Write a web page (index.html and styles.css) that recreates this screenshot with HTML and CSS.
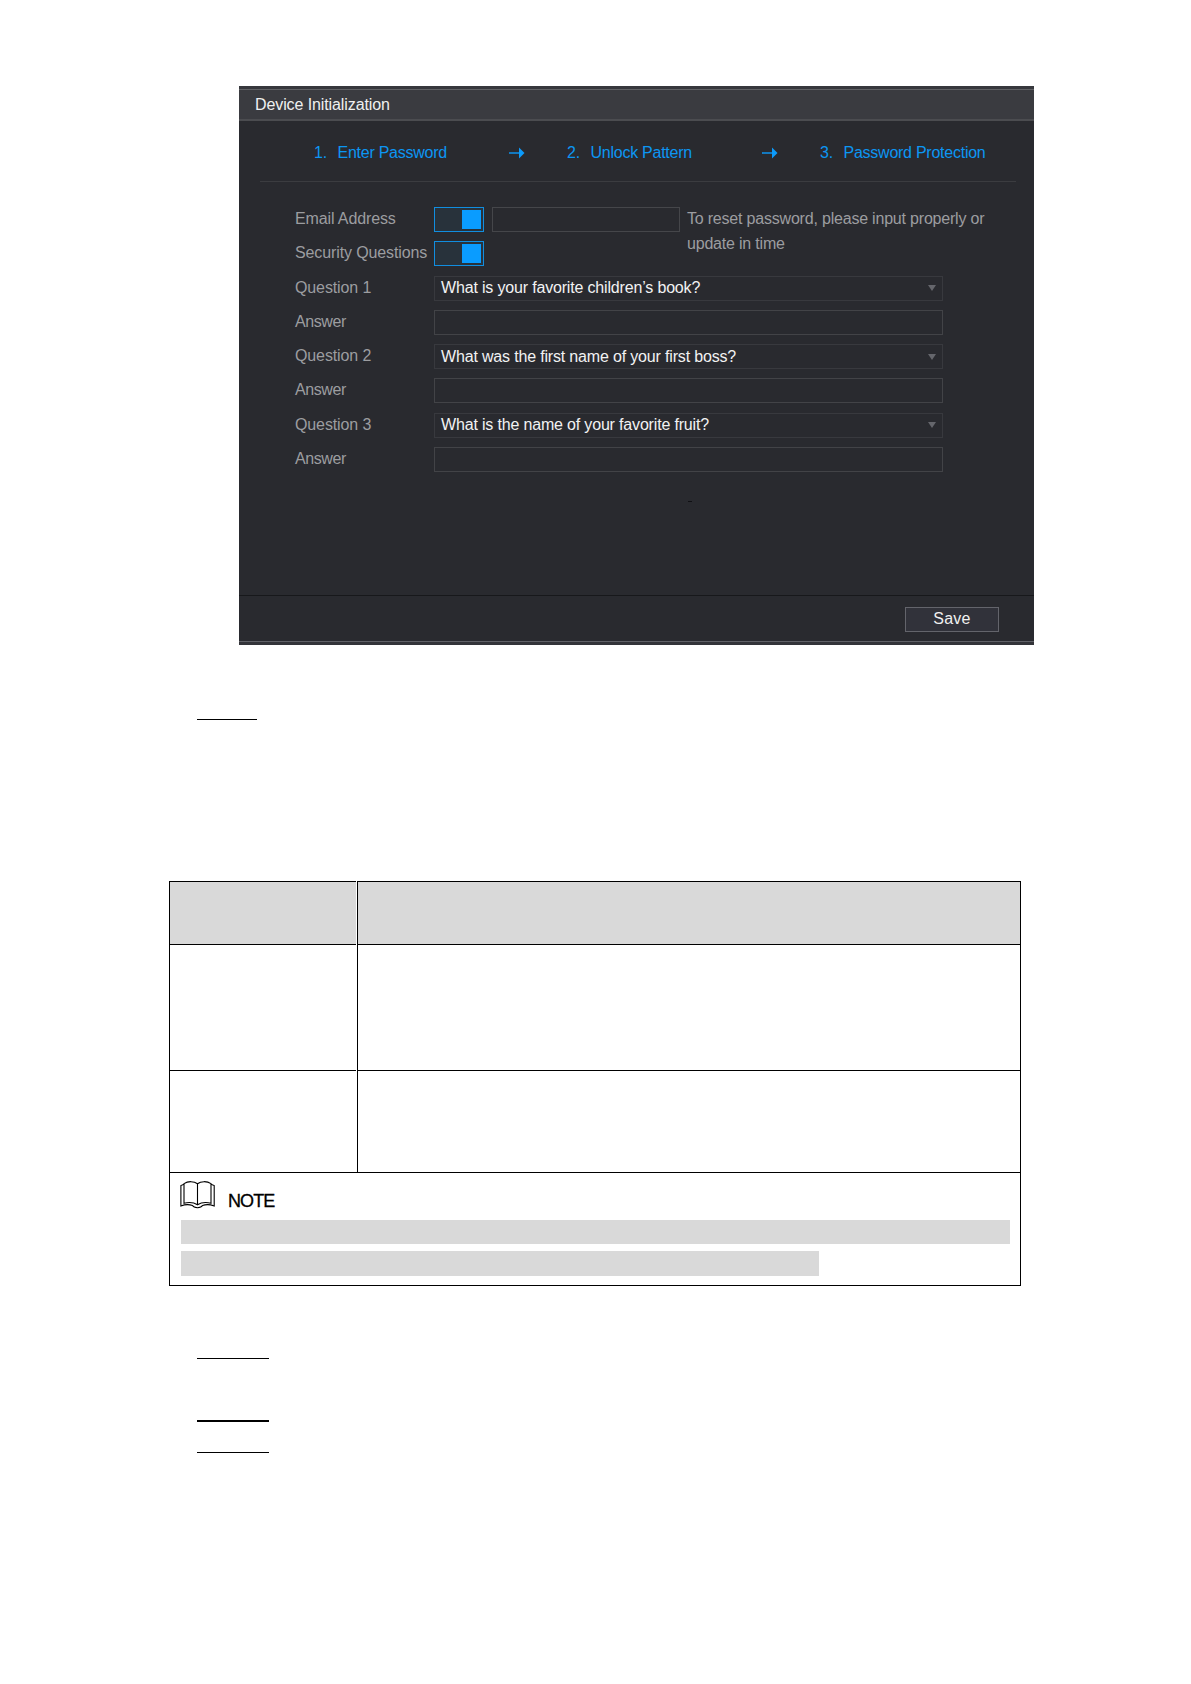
FILE: index.html
```
<!DOCTYPE html>
<html lang="en">

<head>
    <meta charset="UTF-8">
    <meta name="viewport" content="width=device-width, initial-scale=1.0">
    <title>Device Initialization</title>
    <link rel="stylesheet" href="styles.css">
</head>

<body>
    <!-- Dialog -->
    <div class="dialog">
        <div class="dialog-title"><span>Device Initialization</span></div>

        <div class="dialog-body">
            <div class="steps">
                <div class="step step-1"><span class="num">1.</span><span>Enter Password</span></div>
                <svg class="arrow" width="16" height="12" viewBox="0 0 16 12"><path d="M0 6h10" stroke="#0c9bfb" stroke-width="1.4"/><path d="M10 0.5L15.5 6L10 11.5z" fill="#0c9bfb"/></svg>
                <div class="step step-2"><span class="num">2.</span><span>Unlock Pattern</span></div>
                <svg class="arrow" width="16" height="12" viewBox="0 0 16 12"><path d="M0 6h10" stroke="#0c9bfb" stroke-width="1.4"/><path d="M10 0.5L15.5 6L10 11.5z" fill="#0c9bfb"/></svg>
                <div class="step step-3"><span class="num">3.</span><span>Password Protection</span></div>
            </div>

            <div class="form">
                <div class="row">
                    <label>Email Address</label>
                    <div class="toggle"><i></i></div>
                    <div class="email-input"></div>
                    <p class="hint">To reset password, please input properly or<br>update in time</p>
                </div>
                <div class="row">
                    <label>Security Questions</label>
                    <div class="toggle"><i></i></div>
                </div>
                <div class="row">
                    <label>Question 1</label>
                    <div class="field select"><span>What is your favorite children’s book?</span><b class="caret"></b></div>
                </div>
                <div class="row">
                    <label class="answer">Answer</label>
                    <div class="field"></div>
                </div>
                <div class="row">
                    <label>Question 2</label>
                    <div class="field select"><span>What was the first name of your first boss?</span><b class="caret"></b></div>
                </div>
                <div class="row">
                    <label class="answer">Answer</label>
                    <div class="field"></div>
                </div>
                <div class="row">
                    <label>Question 3</label>
                    <div class="field select"><span>What is the name of your favorite fruit?</span><b class="caret"></b></div>
                </div>
                <div class="row">
                    <label class="answer">Answer</label>
                    <div class="field"></div>
                </div>
            </div>
            <div class="speck"></div>
        </div>

        <div class="dialog-footer">
            <div class="save">Save</div>
        </div>
    </div>

    <div class="rule rule-short"></div>

    <!-- Table -->
    <div class="table">
        <div class="table-row head">
            <div class="cell-left"></div>
            <div class="cell-right"></div>
        </div>
        <div class="table-row row-a">
            <div class="cell-left"></div>
            <div class="cell-right"></div>
        </div>
        <div class="table-row row-b">
            <div class="cell-left"></div>
            <div class="cell-right"></div>
        </div>
        <div class="note">
            <div class="note-title">
                <svg width="36" height="28" viewBox="0 0 36 28" fill="none" stroke="#000" stroke-width="1.1">
                    <path d="M17.500 2.800C14 0 8 0 4 2.600V22.300C9 21 14 21.600 17.500 23.800C21 21.600 26 21 31 22.300V2.600C27 0 21 0 17.500 2.800V23.800"/>
                    <path d="M4 3.200L0.900 4.600V25C5 23.400 9 23.200 12.500 24.600C14 27.400 21 27.400 22.500 24.600C26 23.200 30 23.400 34.200 25V4.600L31 3.200"/>
                </svg>
                <span>NOTE</span>
            </div>
            <div class="bar"></div>
            <div class="bar bar-short"></div>
        </div>
    </div>

    <div class="rule rule-a"></div>
    <div class="rule rule-b"></div>
    <div class="rule rule-c"></div>
</body>

</html>
```
FILE: styles.css
```
* {
    box-sizing: border-box;
}

body {
    background: #fff;
    margin: 0;
    padding-top: 86px;
    font-family: "Liberation Sans", Arial, sans-serif;
    font-size: 16px;
    height: 1684px;
    overflow: hidden;
}

/* Dialog */
.dialog {
    width: 795px;
    height: 559px;
    margin-left: 239px;
    background: #292a2f;
    display: flex;
    flex-direction: column;
}

.dialog-title {
    height: 35px;
    background: #3a3b40;
    border-top: 3px solid #37383d;
    border-bottom: 2px solid #4b4c50;
    color: #f0f0f0;
    line-height: 32px;
    padding-left: 16px;
    letter-spacing: -0.1px;
    box-shadow: inset 0 1px #606165;
}

.dialog-body {
    height: 474px;
}

.steps {
    display: flex;
    align-items: center;
    height: 61px;
    margin: 0 18px 0 21px;
    padding: 3px 0 0 54px;
    border-bottom: 1px solid #3b3c40;
    color: #0c96f3;
    letter-spacing: -0.25px;
}

.step {
    display: flex;
    white-space: nowrap;
}

.num {
    width: 23.5px;
}

.step-1,
.step-2 {
    width: 195px;
}

.arrow {
    width: 16px;
    margin-right: 42px;
}

/* Form */
.form {
    padding: 25px 0 0 56px;
}

.row {
    display: flex;
    height: 34.25px;
    line-height: 24px;
    color: #9c9da0;
}

.row label {
    width: 139px;
    flex: none;
    white-space: nowrap;
    letter-spacing: -0.12px;
}

.row .answer {
    letter-spacing: -0.4px;
}

.toggle {
    width: 50px;
    height: 25px;
    border: 1px solid #118ee0;
    background: #28323b;
    padding: 2px;
    display: flex;
    justify-content: flex-end;
}

.toggle i {
    width: 19px;
    background: #0a9cff;
}

.email-input {
    width: 188px;
    height: 25px;
    margin: 0 8px;
    border: 1px solid #45464a;
}

.hint {
    margin: -1px 0 0 -1px;
    height: 25px;
    line-height: 25px;
    white-space: nowrap;
    letter-spacing: -0.2px;
}

.field {
    width: 509px;
    height: 25px;
    border: 1px solid #424347;
}

.select {
    display: flex;
    align-items: center;
    justify-content: space-between;
    padding: 0 6px;
    border-color: #38393e;
    color: #f2f2f3;
    letter-spacing: -0.17px;
}

.caret {
    border: 4px solid transparent;
    border-top: 6px solid #65666c;
    border-bottom: 0;
}

.speck {
    width: 4px;
    height: 1px;
    margin: 20px 0 0 449px;
    background: #101014;
}

.dialog-footer {
    flex: 1;
    border-top: 1px solid #17181b;
    border-bottom: 3px solid #333439;
    box-shadow: inset 0 -1px #606167;
    padding: 11px 35px 0 0;
}

.save {
    width: 94px;
    height: 25px;
    margin-left: auto;
    border: 1px solid #63646b;
    background: #31323a;
    color: #f0f0f0;
    text-align: center;
    line-height: 21px;
    letter-spacing: 0.2px;
}

/* Underlines */
.rule {
    width: 72px;
    height: 1px;
    margin-left: 197px;
    background: #000;
}

.rule-short {
    width: 60px;
    margin-top: 74px;
}

.rule-a {
    margin-top: 72px;
}

.rule-b {
    height: 2px;
    margin-top: 61px;
}

.rule-c {
    margin-top: 30px;
}

/* Table */
.table {
    width: 852px;
    margin: 161px 0 0 169px;
    border: 1px solid #000;
    border-top: 0;
}

.table-row {
    display: flex;
    gap: 1px;
}

.cell-left {
    width: 186px;
    border-top: 1px solid #000;
}

.cell-right {
    flex: 1;
    border-top: 1px solid #000;
    border-left: 1px solid #000;
}

.head {
    height: 63px;
}

.head .cell-left,
.head .cell-right {
    background: #d9d9d9;
}

.row-a {
    height: 126px;
}

.row-b {
    height: 102px;
}

.note {
    height: 113px;
    border-top: 1px solid #000;
    padding: 8px 10px 0 11px;
}

.note-title {
    display: flex;
    height: 39px;
    margin-left: -1px;
}

.note-title span {
    margin: 9px 0 0 12px;
    font-size: 18px;
    line-height: 22px;
    letter-spacing: -0.9px;
    -webkit-text-stroke: 0.3px #000;
}

.bar {
    height: 24px;
    background: #d9d9d9;
}

.bar-short {
    width: 638px;
    height: 25px;
    margin-top: 7px;
}
```
